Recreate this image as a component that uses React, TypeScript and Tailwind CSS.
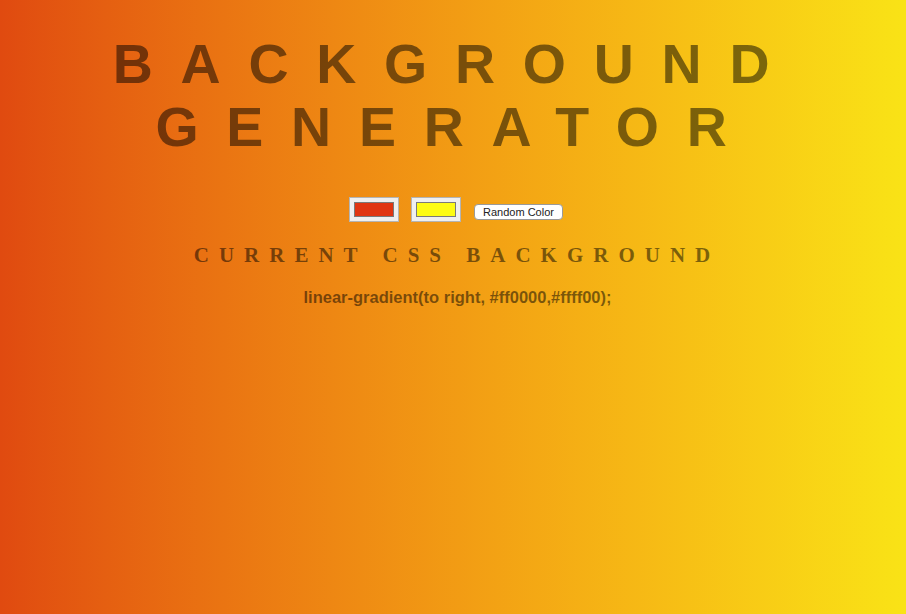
import React from 'react';

const ColorSwatch = ({ color }: { color: string }) => (
  <div className="w-[50px] h-[25px] bg-[#efefef] border border-[#b4b4b4] flex items-center justify-center">
    <div className="w-[40px] h-[15px] border border-[#7a7a7a]" style={{ backgroundColor: color }} />
  </div>
);

export default function App() {
  return (
    <div className="min-h-screen w-full bg-gradient-to-r from-[#e04a10] to-[#f9e316] text-center text-black/50 font-['Liberation_Sans',Arial,sans-serif] flex flex-col items-center">
      {/* Title */}
      <h1 className="mt-[33px] text-[55.5px] leading-[63px] font-bold tracking-[0.5em] uppercase pl-[4px]">
        Background
        <br />
        Generator
      </h1>

      {/* Pickers */}
      <div className="mt-[38px] flex items-start pl-[6px]">
        <ColorSwatch color="#e03512" />
        <div className="ml-[12px]">
          <ColorSwatch color="#fdfc14" />
        </div>
        <button
          type="button"
          className="ml-[13px] mt-[7px] w-[89px] h-[16px] bg-white border border-[#9a9a9a] rounded-[4px] text-[11px] leading-[14px] text-[#222] font-['Liberation_Sans',Arial,sans-serif] tracking-normal"
        >
          Random Color
        </button>
      </div>

      {/* Current CSS */}
      <h3 className="mt-[21px] text-[21px] leading-[24px] font-bold tracking-[10px] uppercase font-['Liberation_Serif','Times_New_Roman',serif] pl-[8px]">
        Current CSS Background
      </h3>

      <p className="mt-[20px] text-[16.5px] leading-[20px] font-bold pl-[9px]">
        linear-gradient(to right, #ff0000,#ffff00);
      </p>
    </div>
  );
}
